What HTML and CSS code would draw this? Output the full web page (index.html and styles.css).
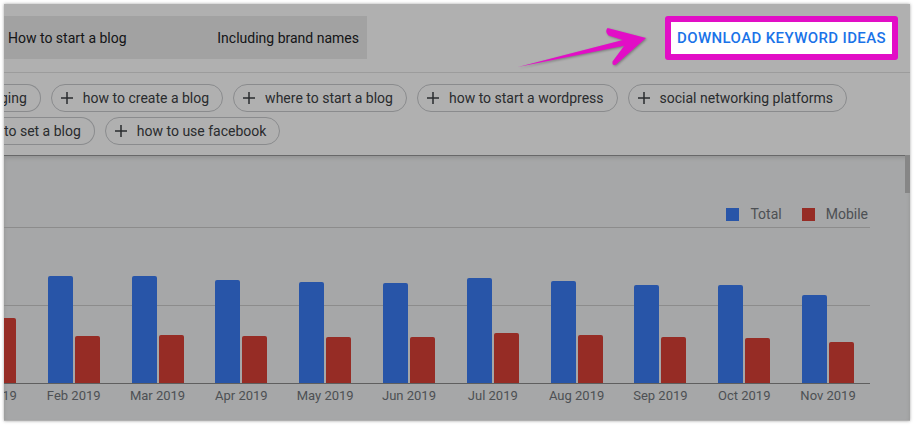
FILE: index.html
```html
<!DOCTYPE html>
<html lang="en">
<head>
  <meta charset="UTF-8">
  <title>Keyword ideas</title>
  <link rel="stylesheet" href="styles.css">
</head>
<body>
  <div class="shot">
    <header class="top">
      <div class="toolbar">
        <div class="filters">
          <span>How to start a blog</span>
          <span>Including brand names</span>
        </div>
        <button class="download">Download keyword ideas</button>
      </div>
      <div class="chips">
        <div class="chip-row">
          <span class="chip cut">ging</span>
          <span class="chip"><svg viewBox="0 0 12 12"><path d="M6 0v12M0 6h12"/></svg>how to create a blog</span>
          <span class="chip"><svg viewBox="0 0 12 12"><path d="M6 0v12M0 6h12"/></svg>where to start a blog</span>
          <span class="chip"><svg viewBox="0 0 12 12"><path d="M6 0v12M0 6h12"/></svg>how to start a wordpress</span>
          <span class="chip"><svg viewBox="0 0 12 12"><path d="M6 0v12M0 6h12"/></svg>social networking platforms</span>
        </div>
        <div class="chip-row">
          <span class="chip cut">to set a blog</span>
          <span class="chip"><svg viewBox="0 0 12 12"><path d="M6 0v12M0 6h12"/></svg>how to use facebook</span>
        </div>
      </div>
    </header>

    <section class="chart">
      <div class="legend">
        <span><i class="total"></i>Total</span>
        <span><i class="mobile"></i>Mobile</span>
      </div>
      <div class="plot">
        <div class="month"><i class="bar total" style="height:150px"></i><i class="bar mobile" style="height:65px"></i></div>
        <div class="month"><i class="bar total" style="height:107px"></i><i class="bar mobile" style="height:47px"></i></div>
        <div class="month"><i class="bar total" style="height:107px"></i><i class="bar mobile" style="height:48px"></i></div>
        <div class="month"><i class="bar total" style="height:103px"></i><i class="bar mobile" style="height:47px"></i></div>
        <div class="month"><i class="bar total" style="height:101px"></i><i class="bar mobile" style="height:46px"></i></div>
        <div class="month"><i class="bar total" style="height:100px"></i><i class="bar mobile" style="height:46px"></i></div>
        <div class="month"><i class="bar total" style="height:105px"></i><i class="bar mobile" style="height:50px"></i></div>
        <div class="month"><i class="bar total" style="height:102px"></i><i class="bar mobile" style="height:48px"></i></div>
        <div class="month"><i class="bar total" style="height:98px"></i><i class="bar mobile" style="height:46px"></i></div>
        <div class="month"><i class="bar total" style="height:98px"></i><i class="bar mobile" style="height:45px"></i></div>
        <div class="month"><i class="bar total" style="height:88px"></i><i class="bar mobile" style="height:41px"></i></div>
      </div>
      <div class="labels">
        <span>Jan 2019</span><span>Feb 2019</span><span>Mar 2019</span><span>Apr 2019</span>
        <span>May 2019</span><span>Jun 2019</span><span>Jul 2019</span><span>Aug 2019</span>
        <span>Sep 2019</span><span>Oct 2019</span><span>Nov 2019</span>
      </div>
      <div class="thumb"></div>
    </section>

    <!-- tutorial highlight: dim everything except the button and arrow -->
    <div class="dim"></div>
    <svg class="arrow" viewBox="504 24 150 50">
      <path d="M518 67 L622.8 40 L608.5 35.5 Q604.5 31.5 607.5 28 L646 38 L616 64.5 Q612 66.5 612.5 61.5 L624.2 45.8 Z"/>
    </svg>
  </div>
</body>
</html>
```

FILE: styles.css
```css
body {
  margin: 0;
  background: #fff;
  font-family: Roboto, "Noto Sans", sans-serif;
}

.shot {
  position: relative;
  margin: 4px;
  width: 906px;
  height: 417px;
  overflow: hidden;
  background: #fff;
  box-shadow: 0 0 3px rgba(0, 0, 0, 0.35);
}

.toolbar {
  display: flex;
  justify-content: space-between;
  align-items: flex-start;
  height: 69px;
  box-sizing: border-box;
  padding: 12px 12px 0 0;
  border-bottom: 1px solid #e3e3e3;
}

.filters {
  display: flex;
  align-items: center;
  justify-content: space-between;
  width: 363px;
  height: 43px;
  box-sizing: border-box;
  padding: 0 8px 0 4px;
  background: #ebebeb;
  font-size: 14px;
  color: #202124;
}

.download {
  position: relative;
  z-index: 2;
  height: 44px;
  padding: 0 6px;
  border: 6px solid #e20ec6;
  border-radius: 3px;
  background: #fff;
  color: #1a73e8;
  font-family: inherit;
  font-size: 15px;
  font-weight: 500;
  letter-spacing: 0.38px;
  text-transform: uppercase;
}

.chips {
  display: flex;
  flex-direction: column;
  gap: 5px;
  padding: 11px 0 10px;
}

.chip-row {
  display: flex;
  gap: 10px;
}

.chip {
  flex-shrink: 0;
  display: flex;
  align-items: center;
  gap: 10px;
  height: 28px;
  box-sizing: border-box;
  padding: 0 13px 0 9px;
  border: 1px solid #c8cacd;
  border-radius: 14px;
  font-size: 14px;
  color: #3c4043;
  white-space: nowrap;
}

.chip svg {
  width: 12px;
  height: 12px;
  stroke: #3c4043;
  stroke-width: 1.5;
}

.chip.cut {
  padding-left: 0;
  border-left: 0;
  border-radius: 0 14px 14px 0;
}

.chip-row:first-child .cut {
  margin-left: -4px;
}

.chart {
  position: relative;
  height: 265px;
  box-sizing: border-box;
  padding-top: 51px;
  background: #f1f2f3;
  box-shadow: inset 0 1px 0 rgba(0, 0, 0, 0.3), inset 0 3px 4px rgba(0, 0, 0, 0.12);
}

.legend {
  display: flex;
  justify-content: flex-end;
  gap: 20px;
  padding-right: 42px;
  height: 16px;
  font-size: 14px;
  line-height: 16px;
  color: #70757a;
}

.legend span {
  display: flex;
  align-items: center;
  gap: 11px;
}

.legend i {
  width: 13px;
  height: 13px;
}

.plot,
.labels {
  display: flex;
  width: 922px;
  margin-left: -56px;
}

.plot {
  height: 155px;
  margin-top: 5px;
  border-top: 1px solid #cbcbcb;
  border-bottom: 1px solid #8a8a8a;
  background: linear-gradient(#cbcbcb, #cbcbcb) 0 77px / 100% 1px no-repeat;
}

.month {
  flex: 1;
  display: flex;
  justify-content: center;
  align-items: flex-end;
  gap: 2px;
}

.bar {
  width: 25px;
  border-radius: 2px 2px 0 0;
}

.total { background: #3b7cf3; }
.mobile { background: #da4036; }

.labels {
  margin-top: 4px;
}

.labels span {
  flex: 1;
  text-align: center;
  font-size: 13px;
  line-height: 15px;
  color: #70757a;
}

.thumb {
  position: absolute;
  top: 0;
  right: 0;
  width: 5px;
  height: 38px;
  background: #c3c3c3;
}

.dim {
  position: absolute;
  inset: 0;
  z-index: 1;
  background: rgba(0, 0, 0, 0.31);
}

.arrow {
  position: absolute;
  z-index: 2;
  left: 500px;
  top: 20px;
  width: 150px;
  height: 50px;
  fill: #e20ec6;
  filter: drop-shadow(1px 1px 1px rgba(0, 0, 0, 0.3));
}
```
